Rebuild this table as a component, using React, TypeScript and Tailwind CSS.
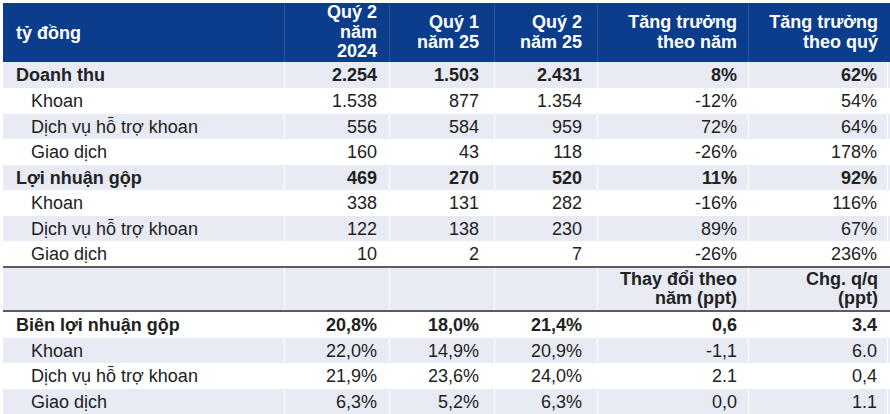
import React from 'react';

type Row = { label: string; values: string[]; bold?: boolean; sub?: boolean; shaded?: boolean; h: string };

const topRows: Row[] = [
  { label: 'Doanh thu', values: ['2.254', '1.503', '2.431', '8%', '62%'], bold: true, shaded: true, h: 'h-[26px]' },
  { label: 'Khoan', values: ['1.538', '877', '1.354', '-12%', '54%'], sub: true, h: 'h-[26px]' },
  { label: 'Dịch vụ hỗ trợ khoan', values: ['556', '584', '959', '72%', '64%'], sub: true, shaded: true, h: 'h-[25px]' },
  { label: 'Giao dịch', values: ['160', '43', '118', '-26%', '178%'], sub: true, h: 'h-[26px]' },
  { label: 'Lợi nhuận gộp', values: ['469', '270', '520', '11%', '92%'], bold: true, shaded: true, h: 'h-[25px]' },
  { label: 'Khoan', values: ['338', '131', '282', '-16%', '116%'], sub: true, h: 'h-[26px]' },
  { label: 'Dịch vụ hỗ trợ khoan', values: ['122', '138', '230', '89%', '67%'], sub: true, shaded: true, h: 'h-[25px]' },
  { label: 'Giao dịch', values: ['10', '2', '7', '-26%', '236%'], sub: true, h: 'h-[25px]' },
];

const marginRows: Row[] = [
  { label: 'Biên lợi nhuận gộp', values: ['20,8%', '18,0%', '21,4%', '0,6', '3.4'], bold: true, h: 'h-[26px]' },
  { label: 'Khoan', values: ['22,0%', '14,9%', '20,9%', '-1,1', '6.0'], sub: true, shaded: true, h: 'h-[25px]' },
  { label: 'Dịch vụ hỗ trợ khoan', values: ['21,9%', '23,6%', '24,0%', '2.1', '0,4'], sub: true, h: 'h-[26px]' },
  { label: 'Giao dịch', values: ['6,3%', '5,2%', '6,3%', '0,0', '1.1'], sub: true, shaded: true, h: 'h-[25px]' },
];

// right padding per value column, so the numbers line up with the header text
const pads = ['pr-[12px]', 'pr-[15px]', 'pr-[15px]', 'pr-[11px]', 'pr-[10px]'];
const grid = 'grid grid-cols-[282px_105px_105px_103px_151px_139px]';

function DataRow({ row }: { row: Row }) {
  return (
    <div className={`${grid} ${row.h} ${row.shaded ? 'bg-[#e8ebf4]' : 'bg-white'} ${row.bold ? 'font-bold' : ''}`}>
      <div className={`flex items-center border-r border-white ${row.sub ? 'pl-[28px]' : 'pl-[13px]'}`}>
        {row.label.normalize('NFC')}
      </div>
      {row.values.map((v, i) => (
        <div key={i} className={`flex items-center justify-end border-r border-white ${pads[i]}`}>
          {v}
        </div>
      ))}
    </div>
  );
}

export default function App() {
  const heads = [
    ['Quý 2', 'năm', '2024'],
    ['Quý 1', 'năm 25'],
    ['Quý 2', 'năm 25'],
    ['Tăng trưởng', 'theo năm'],
    ['Tăng trưởng', 'theo quý'],
  ];
  const headPads = ['pr-[12px]', 'pr-[15px]', 'pr-[15px]', 'pr-[11px]', 'pr-[2px]'];

  return (
    <div className="w-[890px] h-[414px] overflow-hidden bg-white pl-[3px] pt-[3px] font-['Liberation_Sans',Arial,sans-serif] text-[18px] leading-[20px] text-[#222]">
      <div className="grid grid-cols-[282px_105px_105px_103px_151px_131px] h-[59px] bg-[#0c3c8c] text-white font-bold">
        <div className="flex items-center pl-[13px] border-r border-[#2a559c]">{'tỷ đồng'.normalize('NFC')}</div>
        {heads.map((lines, i) => (
          <div key={i} className={`flex flex-col justify-center items-end text-right border-r border-[#2a559c] last:border-r-0 ${headPads[i]} leading-[19.5px]`}>
            {lines.map((l) => (
              <span key={l}>{l.normalize('NFC')}</span>
            ))}
          </div>
        ))}
      </div>

      {topRows.map((r, i) => (
        <DataRow key={i} row={r} />
      ))}

      <div className="h-[2px] bg-[#5c5c5c]" />
      <div className={`${grid} h-[42px] bg-[#e8ebf4] font-bold`}>
        <div className="border-r border-white" />
        <div className="border-r border-white" />
        <div className="border-r border-white" />
        <div className="border-r border-white" />
        <div className="flex flex-col justify-center items-end pr-[11px] leading-[19px] border-r border-white">
          <span>{'Thay đổi theo'.normalize('NFC')}</span>
          <span>{'năm (ppt)'.normalize('NFC')}</span>
        </div>
        <div className="flex flex-col justify-center items-end pr-[10px] leading-[19px]">
          <span>Chg. q/q</span>
          <span>(ppt)</span>
        </div>
      </div>
      <div className="h-[2px] bg-[#5c5c5c]" />

      {marginRows.map((r, i) => (
        <DataRow key={i} row={r} />
      ))}
    </div>
  );
}
